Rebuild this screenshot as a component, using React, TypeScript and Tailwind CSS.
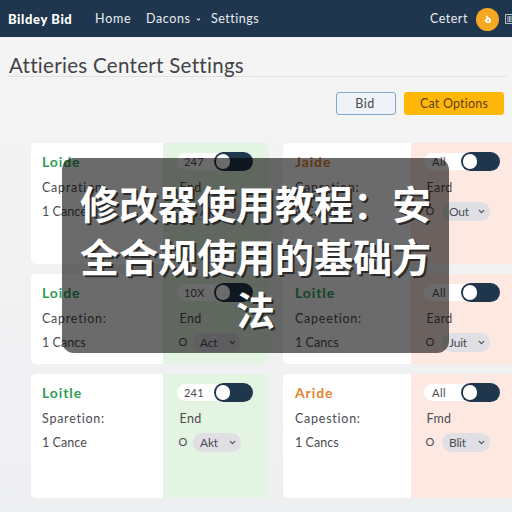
import { ChevronDown } from "lucide-react"
import clsx from "clsx"

interface Offer {
  title: string
  label: string
  count: string
  badge: string
  end: string
  option: string
  titleColor: string
}

interface OfferCardProps {
  offer: Offer
  side: "left" | "right"
}

const green = "text-[#2f9e56]"
const orange = "text-[#e5812f]"

const leftOffers: Offer[] = [
  { title: "Loide", label: "Capration:", count: "1 Cance", badge: "247", end: "End", option: "Akt", titleColor: green },
  { title: "Loide", label: "Capretion:", count: "1 Cancs", badge: "10X", end: "End", option: "Act", titleColor: green },
  { title: "Loitle", label: "Sparetion:", count: "1 Cance", badge: "241", end: "End", option: "Akt", titleColor: green },
]

const rightOffers: Offer[] = [
  { title: "Jaide", label: "Capration:", count: "1 Cancs", badge: "All", end: "Eard", option: "Out", titleColor: orange },
  { title: "Loitle", label: "Capeetion:", count: "1 Cancs", badge: "All", end: "Eard", option: "Juit", titleColor: green },
  { title: "Aride", label: "Capestion:", count: "1 Cancs", badge: "All", end: "Fmd", option: "Blit", titleColor: orange },
]

function Toggle() {
  return (
    <span className="-ml-2 flex h-[19px] w-[39px] shrink-0 items-center rounded-full bg-[#20364c] px-[2px]">
      <span className="h-[15px] w-[14px] rounded-full bg-white" />
    </span>
  )
}

function OfferCard({ offer, side }: OfferCardProps) {
  const isLeft = side === "left"

  return (
    <div className={clsx("flex overflow-hidden bg-white text-[#4b4c52]", isLeft ? "rounded-[5px]" : "rounded-l-[5px]")}>
      <div className={clsx("shrink-0 pt-[9px]", isLeft ? "w-[132px] pl-[11px]" : "w-[128px] pl-3")}>
        <h3 className={clsx("h-[19px] text-[14px] leading-[19px] font-bold tracking-[0.9px]", offer.titleColor)}>
          {offer.title}
        </h3>
        <p className="mt-[8px] h-[18px] text-[12.5px] leading-[18px] tracking-[0.75px]">{offer.label}</p>
        <p className="mt-[6px] h-[18px] text-[12.5px] leading-[18px] tracking-[0.05px]">{offer.count}</p>
      </div>

      <div className={clsx("flex-1 pt-[9px]", isLeft ? "bg-[#e3f5e2] pl-[14px]" : "bg-[#fee9e2] pl-[13px]")}>
        <div className="flex h-[19px] items-center">
          <span
            className={clsx(
              "h-[17px] w-[45px] shrink-0 rounded-l-full bg-white text-[11px] leading-[18px]",
              isLeft ? "pl-[7px] tracking-[0.2px]" : "pl-[8px] tracking-[0.5px]"
            )}
          >
            {offer.badge}
          </span>
          <Toggle />
        </div>
        <p className="mt-[8px] h-[18px] pl-[2.5px] text-[12.5px] leading-[18px] tracking-[0.4px]">{offer.end}</p>
        <div className="mt-[5px] flex h-[19px] items-center text-[12px]">
          <span className={clsx("shrink-0 pl-[1.5px] text-[11px]", isLeft ? "w-[16px]" : "w-[18px]")}>O</span>
          <span className="flex h-[19px] w-[48px] items-center justify-between rounded-full bg-[#dfdfe4] pr-1 pl-[7px] tracking-[-0.2px]">
            {offer.option}
            <ChevronDown className="h-[9px] w-[9px]" strokeWidth={3} />
          </span>
        </div>
      </div>
    </div>
  )
}

function Navbar() {
  return (
    <nav className="flex h-[37px] items-center bg-[#20364e] pt-px pl-2 text-[12.5px] leading-[18px] text-[#e8edf2]">
      <span className="w-[87px] shrink-0 text-[13px] font-black tracking-[0.6px] text-white">Bildey Bid</span>
      <span className="w-[51px] shrink-0 tracking-[0.8px]">Home</span>
      <span className="flex w-[65px] shrink-0 items-center gap-[5px] tracking-[0.6px]">
        Dacons
        <ChevronDown className="h-[5px] w-[5px]" strokeWidth={5} />
      </span>
      <span className="shrink-0 tracking-[0.5px]">Settings</span>
      <div className="ml-auto flex shrink-0 items-center">
        <span className="w-[46px] tracking-[0.5px]">Cetert</span>
        <span className="flex h-[23px] w-[23px] items-center justify-center rounded-full bg-[#f7a823]">
          <svg viewBox="0 0 10 10" className="h-[9px] w-[9px]" fill="none" stroke="white" strokeWidth="1.9">
            <path d="M3.6 .8 L5.8 3.8" />
            <circle cx="5.8" cy="6.2" r="2.1" />
            <path d="M1.5 6 L4 7.8" strokeWidth="1.3" />
          </svg>
        </span>
        <svg viewBox="0 0 7 10" className="ml-[6px] h-[10px] w-[7px]" fill="none" stroke="#b6c1cc" strokeWidth="1">
          <path d="M7 .5H.5v9H7M2 3h5M2 5h5M2 7.2h5M4.7 2v6" />
        </svg>
      </div>
    </nav>
  )
}

export default function App() {
  return (
    <div className="relative h-[512px] w-[512px] overflow-hidden bg-linear-to-b from-[#f5f5f5] to-[#eeeff1] font-['Lato','Noto_Sans',sans-serif]">
      <Navbar />

      <header className="ml-2 h-[40px] w-[498px] border-b border-[#dfe0e1] pt-[15px] pl-[1px]">
        <h1 className="text-[20.5px] leading-[27px] tracking-[0.3px] whitespace-nowrap text-[#424247]">
          Attieries Centert Settings
        </h1>
      </header>

      <div className="mt-[15px] mr-2 flex justify-end gap-2 text-[12.5px]">
        <button className="h-[23px] w-[60px] rounded-[3px] border border-[#81a9cc] bg-[#eff3f7] pt-px pr-[2px] tracking-[0.5px] text-[#47494f]">
          Bid
        </button>
        <button className="h-[23px] w-[100px] rounded-[3px] bg-[#ffb808] pt-px tracking-[0.2px] text-[#633d10]">
          Cat Options
        </button>
      </div>

      <main className="mt-[28px] flex gap-[14px] pl-[31px]">
        <div className="grid w-[238px] shrink-0 grid-rows-[121px_90px_124px] gap-y-[10px]">
          {leftOffers.map((offer, i) => (
            <OfferCard key={i} offer={offer} side="left" />
          ))}
        </div>
        <div className="grid flex-1 grid-rows-[121px_90px_124px] gap-y-[10px]">
          {rightOffers.map((offer, i) => (
            <OfferCard key={i} offer={offer} side="right" />
          ))}
        </div>
      </main>

      {/* Headline banner over the cards */}
      <div className="absolute top-[158px] left-[62px] flex h-[195px] w-[387px] items-center justify-center rounded-[12px] bg-[#040404]/59">
        <h2 className="w-[355px] text-center font-['Noto_Sans_CJK_SC',sans-serif] text-[39px] leading-[53px] font-bold text-white [text-shadow:2px_2px_0_rgba(30,30,30,0.85)]">
          修改器使用教程：安
          <br />
          全合规使用的基础方
          <br />法
        </h2>
      </div>
    </div>
  )
}
